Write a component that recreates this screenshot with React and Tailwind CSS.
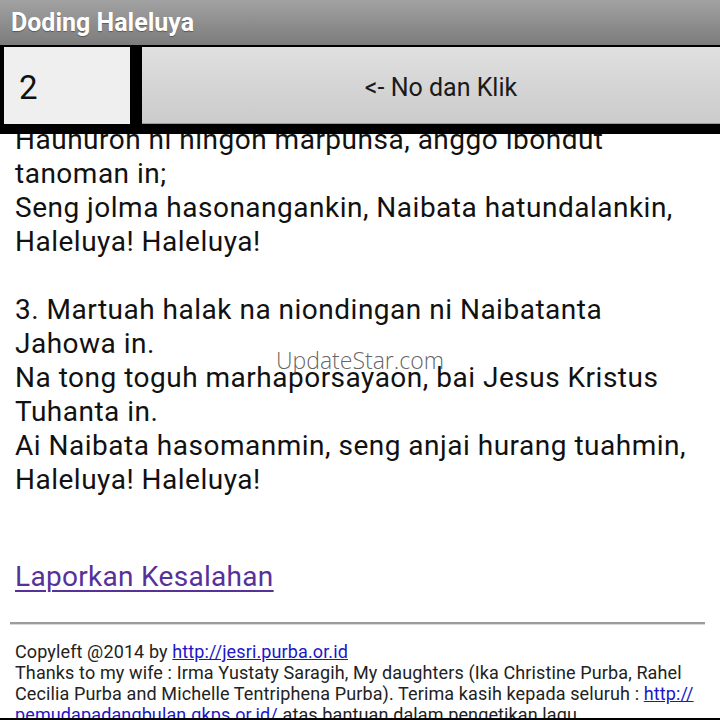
import React from "react";

const lyrics = [
  "Hauhuron ni hingon marpunsa, anggo ibondut",
  "tanoman in;",
  "Seng jolma hasonangankin, Naibata hatundalankin,",
  "Haleluya! Haleluya!",
  "\u00a0",
  "3. Martuah halak na niondingan ni Naibatanta",
  "Jahowa in.",
  "Na tong toguh marhaporsayaon, bai Jesus Kristus",
  "Tuhanta in.",
  "Ai Naibata hasomanmin, seng anjai hurang tuahmin,",
  "Haleluya! Haleluya!",
];

export default function App() {
  return (
    <div
      className="relative w-[720px] h-[720px] overflow-hidden bg-white flex flex-col"
      style={{ fontFamily: "Roboto, 'Noto Sans', sans-serif" }}
    >
      <div className="h-[45px] shrink-0 bg-gradient-to-b from-[#a2a2a2] to-[#7c7c7c] flex items-center pl-[11px]">
        <span className="text-white font-bold text-[25px] leading-none [text-shadow:0_1px_1px_rgba(0,0,0,0.35)]">
          Doding Haleluya
        </span>
      </div>
      <div className="h-[89px] shrink-0 bg-black flex items-start gap-[12px] pl-[4px] pt-[2px] z-10">
        <div className="w-[126px] h-[77px] bg-[#efefef] flex items-center pl-[15px] pt-[4px] text-[33px] text-[#111]">
          2
        </div>
        <div className="flex-1 h-[77px] bg-gradient-to-b from-[#e0e0e0] to-[#cbcbcb] flex items-center justify-center pl-[20px] pt-[5px] text-[25px] text-[#1a1a1a] border-b border-[#9a9a9a]">
          &lt;- No dan Klik
        </div>
      </div>
      <div className="flex-1 overflow-hidden">
        <div className="-mt-[11px] pl-[15px] text-[28px] tracking-[0.5px] leading-[34px] text-[#111]">
          {lyrics.map((l, i) => (
            <div key={i} className="whitespace-nowrap">
              {l}
            </div>
          ))}
          <div className="h-[63px]" />
          <div className="text-[#58309a] underline underline-offset-[4px] decoration-[2px] whitespace-nowrap tracking-[0.3px]">
            Laporkan Kesalahan
          </div>
          <div className="h-[28px]" />
          <div className="mr-[15px] -ml-[5px] h-[3px] bg-[#9c9c9c] border-b border-[#d8d8d8]" />
          <div className="mt-[16px] text-[18px] tracking-[0.12px] leading-[21px] text-[#222]">
            <div className="whitespace-nowrap">
              Copyleft @2014 by{" "}
              <span className="text-[#1b17c9] underline">http://jesri.purba.or.id</span>
            </div>
            <div className="whitespace-nowrap">
              Thanks to my wife : Irma Yustaty Saragih, My daughters (Ika Christine Purba, Rahel
            </div>
            <div className="whitespace-nowrap">
              Cecilia Purba and Michelle Tentriphena Purba). Terima kasih kepada seluruh :{" "}
              <span className="text-[#1b17c9] underline">http://</span>
            </div>
            <div className="whitespace-nowrap">
              <span className="text-[#1b17c9] underline">pemudapadangbulan.gkps.or.id/</span> atas bantuan dalam pengetikan lagu
            </div>
          </div>
        </div>
      </div>
      <div className="h-[2px] shrink-0 bg-black" />
      <div
        className="absolute left-[276px] top-[349px] text-[23px] leading-none text-[#3a3a3a]/80"
        style={{ fontFamily: "'Open Sans', sans-serif", fontWeight: 300 }}
      >
        UpdateStar.com
      </div>
    </div>
  );
}
